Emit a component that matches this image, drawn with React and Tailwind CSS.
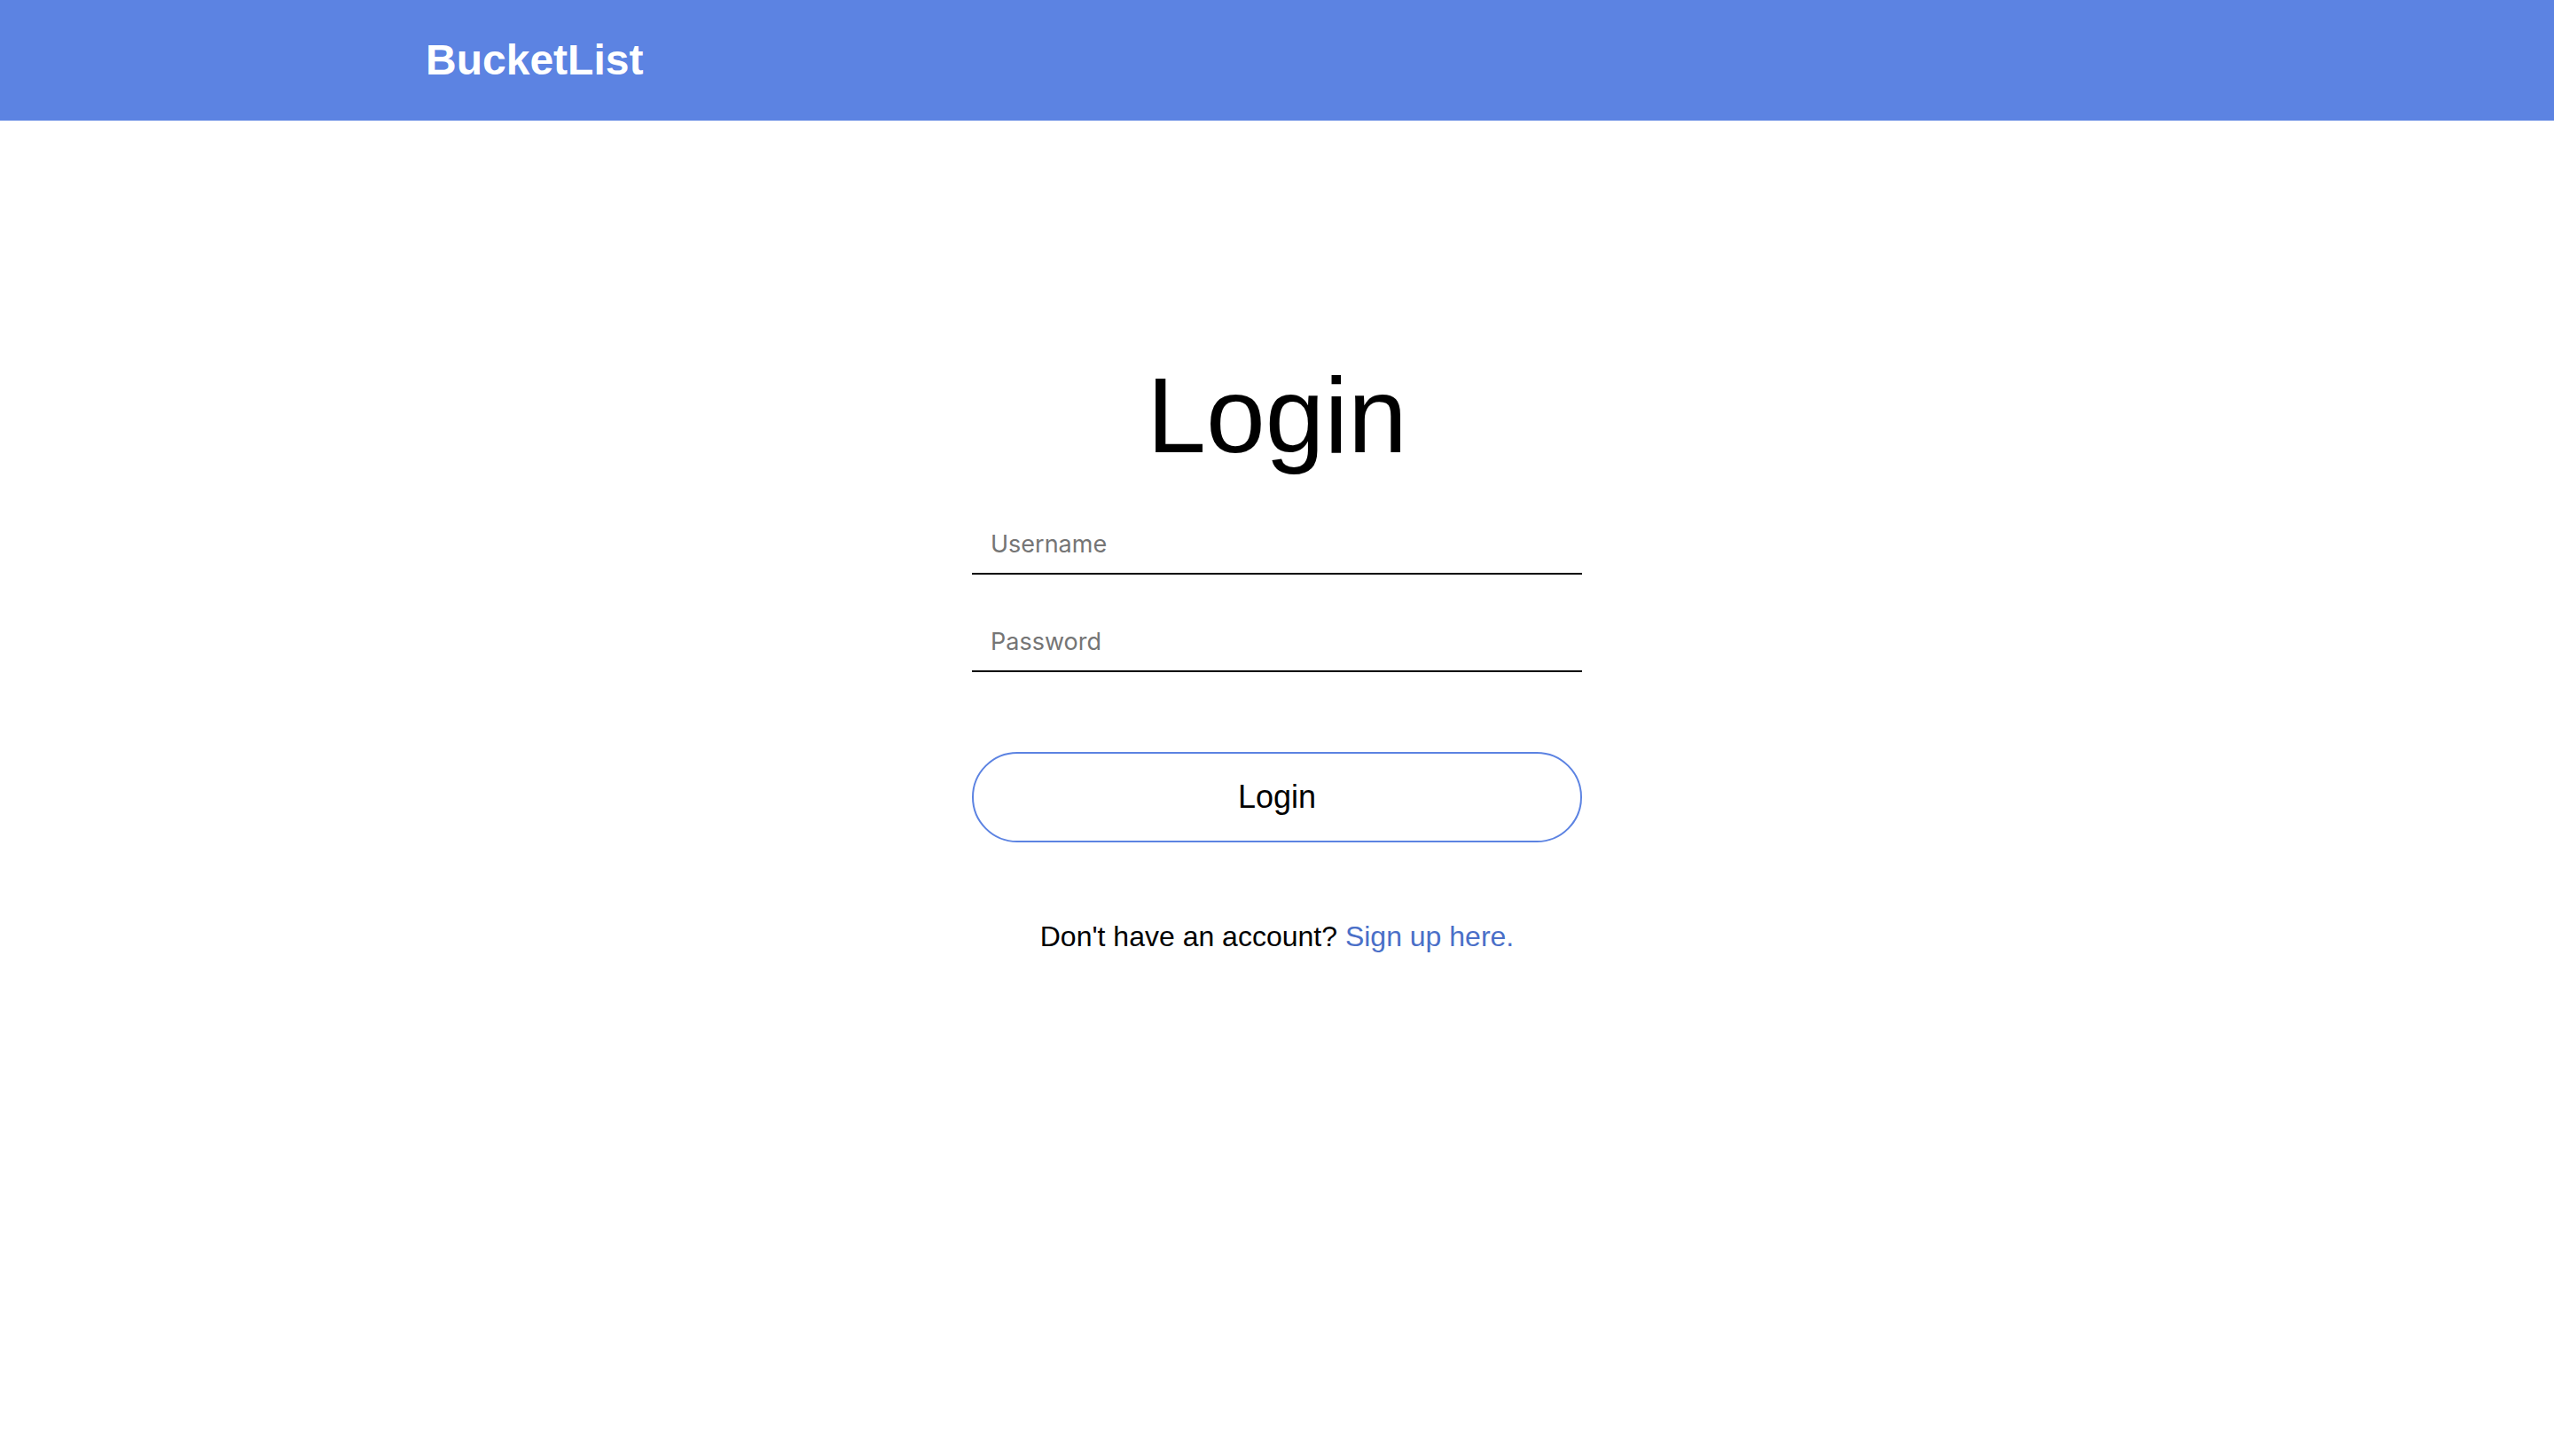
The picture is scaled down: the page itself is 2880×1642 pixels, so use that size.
const fieldClass =
  "block h-[68px] w-full border-b-2 border-black bg-transparent px-[21px] font-['Inter',sans-serif] text-[27px] outline-none placeholder:text-[#757575]";

export default function App() {
  return (
    <div className="min-h-screen bg-white font-['Liberation_Sans',Arial,sans-serif] text-black">
      <header className="bg-[#5c83e2]">
        <div className="mx-auto flex h-[136px] max-w-[1920px] items-center">
          <a href="#" className="text-[48px] leading-none font-bold text-white">BucketList</a>
        </div>
      </header>
      <main className="mx-auto max-w-[688px] pt-[262px] text-center">
        <h1 className="text-[120px] leading-[140px]">Login</h1>
        <form onSubmit={(e) => e.preventDefault()} className="pt-[42px]">
          <div className="flex flex-col gap-[42px]">
            <input type="text" aria-label="Username" placeholder="Username" className={fieldClass} />
            <input type="password" aria-label="Password" placeholder="Password" className={fieldClass} />
          </div>
          <button type="submit" className="mt-[90px] h-[102px] w-full rounded-full border-2 border-[#5c83e2] text-[36px]">Login</button>
        </form>
        <p className="mt-[86px] text-[32px] leading-[40px] whitespace-nowrap">
          Don't have an account? <a href="#" className="text-[#4a6fc8]">Sign up here.</a>
        </p>
      </main>
    </div>
  );
}
